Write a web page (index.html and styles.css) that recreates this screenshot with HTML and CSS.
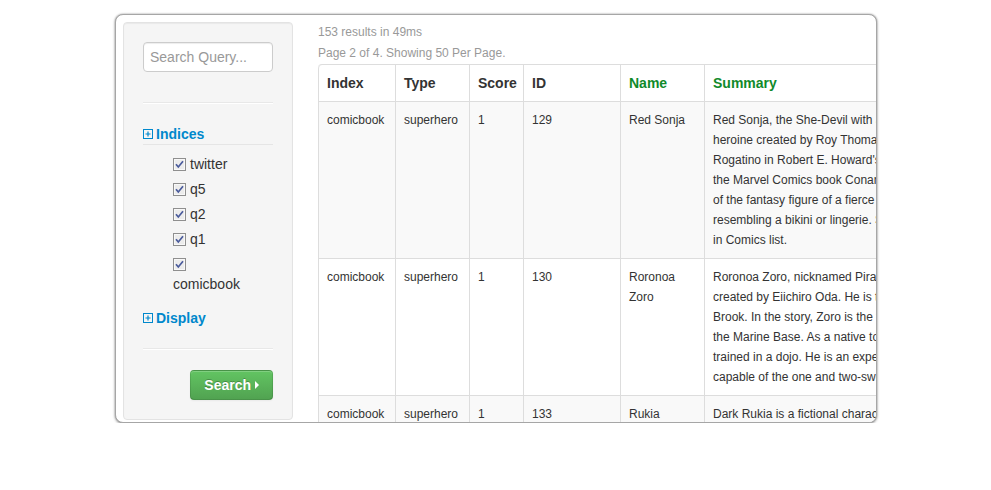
FILE: index.html
```html
<!DOCTYPE html>
<html>
<head>
<meta charset="utf-8">
<link rel="stylesheet" href="styles.css">
</head>
<body>
<div class="frame">
  <aside class="well">
    <div class="search-form">
      <input class="query" type="text" placeholder="Search Query...">
    </div>
    <hr class="sep">
    <div class="section-title open"><svg class="plus" width="10" height="10" viewBox="0 0 10 10"><rect x="0.5" y="0.5" width="9" height="9" fill="none" stroke="#0088cc" stroke-width="1"/><path d="M2.5 5H7.5M5 2.5V7.5" stroke="#0088cc" stroke-width="1.2"/></svg>Indices</div>
    <ul class="indices">
      <li><label><svg class="cb" width="13" height="13" viewBox="0 0 13 13"><rect x="0.5" y="0.5" width="12" height="12" fill="#e6e6e6" stroke="#8f8f8f"/><rect x="1.5" y="1.5" width="10" height="10" fill="#ececec" stroke="#f8f8f8"/><path d="M3 6.2L5.3 9L10 3.2" fill="none" stroke="#4a5b9c" stroke-width="1.7"/></svg>twitter</label></li>
      <li><label><svg class="cb" width="13" height="13" viewBox="0 0 13 13"><rect x="0.5" y="0.5" width="12" height="12" fill="#e6e6e6" stroke="#8f8f8f"/><rect x="1.5" y="1.5" width="10" height="10" fill="#ececec" stroke="#f8f8f8"/><path d="M3 6.2L5.3 9L10 3.2" fill="none" stroke="#4a5b9c" stroke-width="1.7"/></svg>q5</label></li>
      <li><label><svg class="cb" width="13" height="13" viewBox="0 0 13 13"><rect x="0.5" y="0.5" width="12" height="12" fill="#e6e6e6" stroke="#8f8f8f"/><rect x="1.5" y="1.5" width="10" height="10" fill="#ececec" stroke="#f8f8f8"/><path d="M3 6.2L5.3 9L10 3.2" fill="none" stroke="#4a5b9c" stroke-width="1.7"/></svg>q2</label></li>
      <li><label><svg class="cb" width="13" height="13" viewBox="0 0 13 13"><rect x="0.5" y="0.5" width="12" height="12" fill="#e6e6e6" stroke="#8f8f8f"/><rect x="1.5" y="1.5" width="10" height="10" fill="#ececec" stroke="#f8f8f8"/><path d="M3 6.2L5.3 9L10 3.2" fill="none" stroke="#4a5b9c" stroke-width="1.7"/></svg>q1</label></li>
      <li><label><svg class="cb" width="13" height="13" viewBox="0 0 13 13"><rect x="0.5" y="0.5" width="12" height="12" fill="#e6e6e6" stroke="#8f8f8f"/><rect x="1.5" y="1.5" width="10" height="10" fill="#ececec" stroke="#f8f8f8"/><path d="M3 6.2L5.3 9L10 3.2" fill="none" stroke="#4a5b9c" stroke-width="1.7"/></svg> comicbook</label></li>
    </ul>
    <div class="section-title"><svg class="plus" width="10" height="10" viewBox="0 0 10 10"><rect x="0.5" y="0.5" width="9" height="9" fill="none" stroke="#0088cc" stroke-width="1"/><path d="M2.5 5H7.5M5 2.5V7.5" stroke="#0088cc" stroke-width="1.2"/></svg>Display</div>
    <hr class="sep">
    <div class="actions">
      <button class="btn-search" type="button">Search<span class="caret"></span></button>
    </div>
  </aside>
  <main class="results">
    <p class="meta">153 results in 49ms</p>
    <p class="meta second">Page 2 of 4. Showing 50 Per Page.</p>
    <table class="grid">
      <thead>
        <tr>
          <th class="c-index">Index</th>
          <th class="c-type">Type</th>
          <th class="c-score">Score</th>
          <th class="c-id">ID</th>
          <th class="c-name hl">Name</th>
          <th class="c-summary hl">Summary</th>
        </tr>
      </thead>
      <tbody>
        <tr class="odd">
          <td>comicbook</td>
          <td>superhero</td>
          <td>1</td>
          <td>129</td>
          <td>Red Sonja</td>
          <td class="summary">Red Sonja, the She-Devil with a Sword, is a fictional<br>heroine created by Roy Thomas and Barry Windsor-Smith, based on Red Sonya of<br>Rogatino in Robert E. Howard's short story The Shadow of the Vulture. She was<br>the Marvel Comics book Conan the Barbarian in 1973. She embodies many aspects<br>of the fantasy figure of a fierce warrior woman, often wearing scale-mail armor<br>resembling a bikini or lingerie. She was ranked 90th in the 100 Sexiest Women<br>in Comics list.</td>
        </tr>
        <tr>
          <td>comicbook</td>
          <td>superhero</td>
          <td>1</td>
          <td>130</td>
          <td>Roronoa Zoro</td>
          <td class="summary">Roronoa Zoro, nicknamed Pirate Hunter Zoro, is a fictional character<br>created by Eiichiro Oda. He is the first crew member to join Luffy, before<br>Brook. In the story, Zoro is the first to join Luffy after being saved from<br>the Marine Base. As a native to the East Blue, Zoro grew up and<br>trained in a dojo. He is an expert swordsman who is<br>capable of the one and two-sword styles, as well as his own three-sword style.</td>
        </tr>
        <tr class="odd">
          <td>comicbook</td>
          <td>superhero</td>
          <td>1</td>
          <td>133</td>
          <td>Rukia</td>
          <td class="summary">Dark Rukia is a fictional character in the Bleach series.</td>
        </tr>
      </tbody>
    </table>
  </main>
</div>
</body>
</html>
```

FILE: styles.css
```css
html, body {
  margin: 0;
  padding: 0;
  background: #fff;
}

body {
  font-family: "Liberation Sans", Arial, Helvetica, sans-serif;
  font-size: 14px;
  line-height: 20px;
  color: #333;
}

.frame {
  box-sizing: border-box;
  width: 762px;
  height: 409px;
  margin: 14px 0 0 115px;
  padding: 7px;
  border: 1px solid #a6a6a6;
  border-radius: 8px;
  box-shadow: 0 0 2px rgba(0, 0, 0, 0.35), 0 1px 3px rgba(0, 0, 0, 0.3);
  background: #fff;
  overflow: hidden;
  display: flex;
  align-items: flex-start;
  gap: 25px;
}

.well {
  box-sizing: border-box;
  flex: 0 0 170px;
  width: 170px;
  padding: 19px;
  background: #f5f5f5;
  border: 1px solid #e3e3e3;
  border-radius: 4px;
  box-shadow: inset 0 1px 1px rgba(0, 0, 0, 0.05);
}

.search-form {
  padding-bottom: 10px;
}

.query {
  display: block;
  box-sizing: border-box;
  width: 130px;
  height: 30px;
  margin: 0;
  padding: 4px 6px;
  font-family: inherit;
  font-size: 14px;
  line-height: 20px;
  color: #555;
  background: #fff;
  border: 1px solid #ccc;
  border-radius: 4px;
  box-shadow: inset 0 1px 1px rgba(0, 0, 0, 0.075);
  outline: none;
}

.query::placeholder {
  color: #999;
}

.sep {
  margin: 20px 0;
  height: 0;
  border: 0;
  border-top: 1px solid #e8e8e8;
  border-bottom: 1px solid #fff;
}

.section-title {
  display: flex;
  align-items: center;
  height: 20px;
  font-weight: bold;
  font-size: 14px;
  color: #0088cc;
}

.section-title.open {
  border-bottom: 1px solid #e5e5e5;
}

.plus {
  display: block;
  margin-right: 3px;
  flex: 0 0 auto;
}

.indices {
  list-style: none;
  margin: 0 0 14px 0;
  padding: 9px 0 0 30px;
}

.indices li {
  margin-bottom: 5px;
}

.indices label {
  display: block;
  width: 80px;
  line-height: 20px;
  color: #333;
}

.cb {
  vertical-align: -2px;
  margin-right: 4px;
}

.actions {
  display: flex;
  justify-content: flex-end;
}

.btn-search {
  display: flex;
  align-items: center;
  box-sizing: border-box;
  height: 30px;
  padding: 4px 13px 4px 13px;
  font-family: inherit;
  font-size: 14px;
  font-weight: bold;
  line-height: 20px;
  color: #fff;
  text-shadow: 0 -1px 0 rgba(0, 0, 0, 0.25);
  background: linear-gradient(to bottom, #62c462, #51a351);
  border: 1px solid #4a9a4a;
  border-color: rgba(0, 0, 0, 0.1) rgba(0, 0, 0, 0.1) rgba(0, 0, 0, 0.25);
  border-radius: 4px;
  box-shadow: inset 0 1px 0 rgba(255, 255, 255, 0.2), 0 1px 2px rgba(0, 0, 0, 0.05);
}

.caret {
  display: inline-block;
  width: 0;
  height: 0;
  margin-left: 4px;
  border-top: 4px solid transparent;
  border-bottom: 4px solid transparent;
  border-left: 4px solid #fff;
}

.results {
  flex: 1 1 auto;
  min-width: 0;
}

.meta {
  margin: 0;
  font-size: 12px;
  line-height: 20px;
  color: #999;
}

.meta.second {
  margin-top: 1px;
}

.grid {
  margin-top: 1px;
  width: 867px;
  table-layout: fixed;
  border-collapse: separate;
  border-spacing: 0;
  border: 1px solid #ddd;
  border-left: 0;
  border-radius: 4px;
}

.grid th,
.grid td {
  box-sizing: border-box;
  padding: 8px;
  text-align: left;
  vertical-align: top;
  border-left: 1px solid #ddd;
  border-top: 1px solid #ddd;
}

.grid thead th {
  border-top: 0;
  font-size: 14px;
  font-weight: bold;
  line-height: 20px;
  color: #333;
}

.grid thead th:first-child {
  border-top-left-radius: 4px;
}

.grid th.hl {
  color: #108a2a;
}

.grid td {
  font-size: 12px;
  line-height: 20px;
  color: #333;
}

.grid tr.odd td {
  background: #f9f9f9;
}

.grid td.summary {
  white-space: nowrap;
  overflow: hidden;
}

.c-index { width: 77px; }
.c-type { width: 74px; }
.c-score { width: 54px; }
.c-id { width: 97px; }
.c-name { width: 84px; }
.c-summary { width: 480px; }
```
